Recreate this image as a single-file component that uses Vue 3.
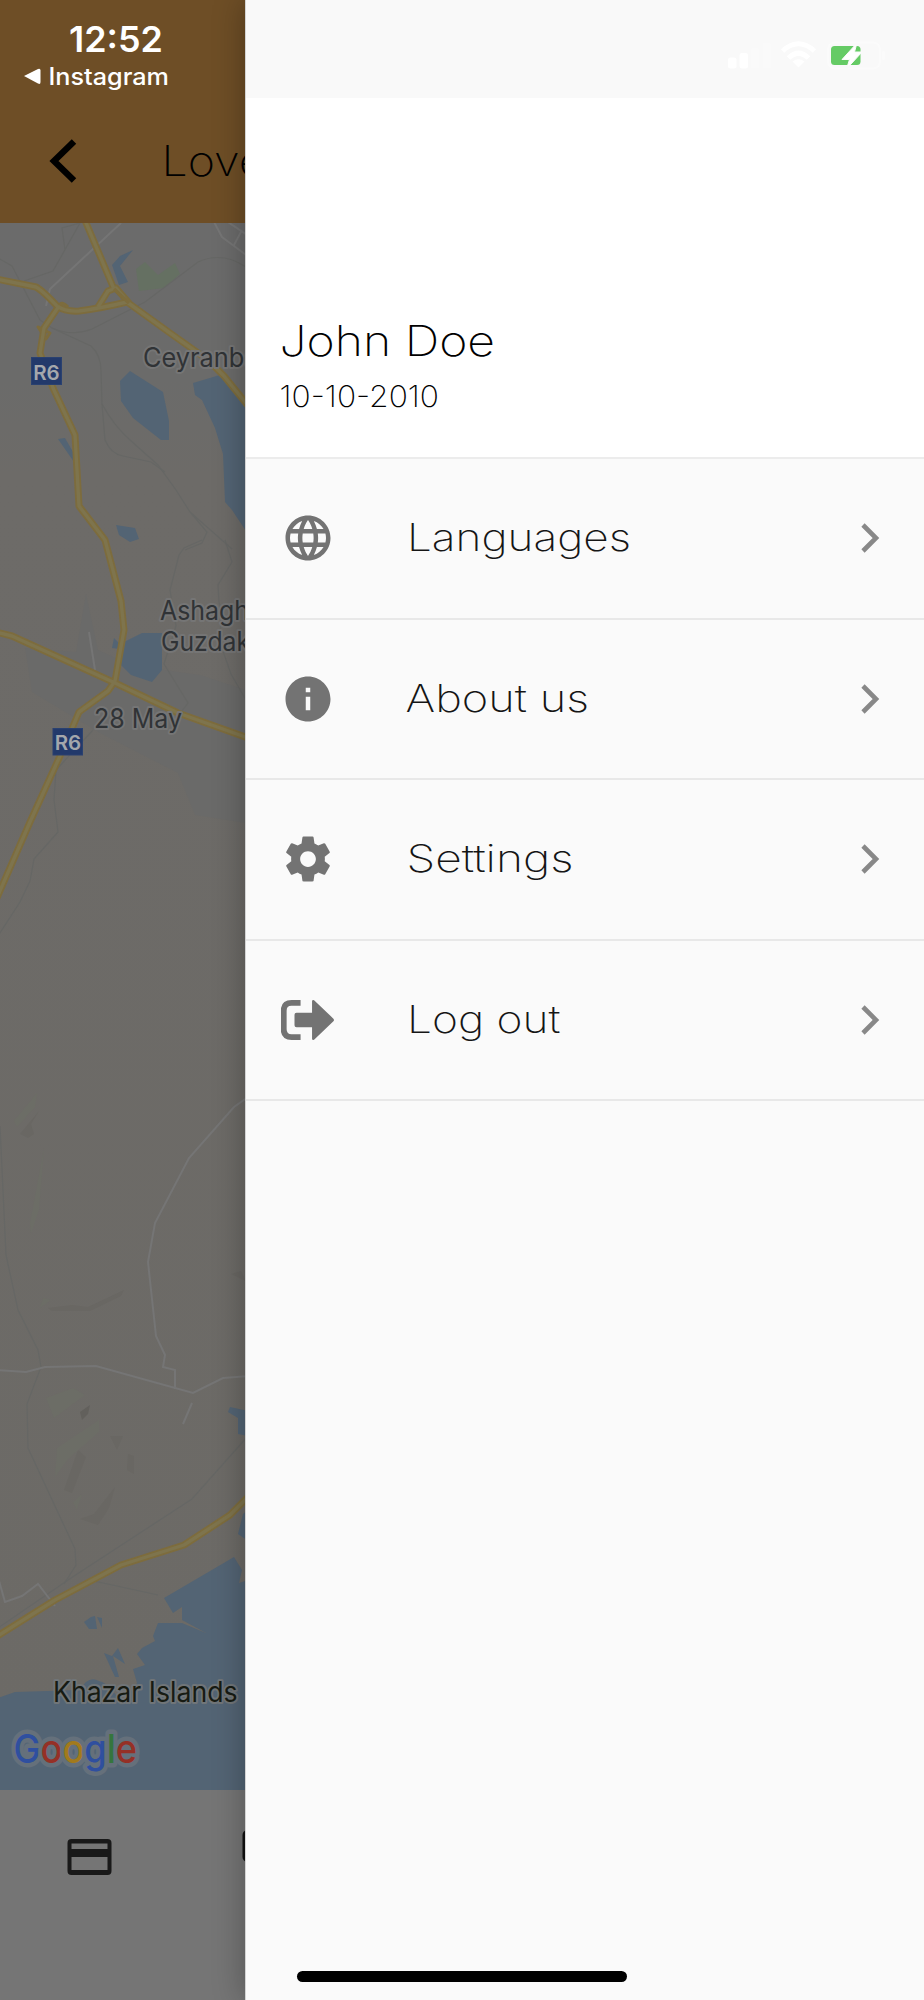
<script setup>
const rows = [
  { icon: 'globe', label: 'Languages', x: -1, width: 224 },
  { icon: 'info', label: 'About us', x: -2.5, width: 183.5 },
  { icon: 'gear', label: 'Settings', x: -1.5, width: 167 },
  { icon: 'logout', label: 'Log out', x: -1, width: 153.5 },
]

const highways = [
  'M84 218 L114 289',
  'M-4 279 L36 287 Q42 290 57 306 Q66 312 79 311 Q102 308 127 302 L170 333 L208 360 L224 376 L250 408',
  'M98 307 L108 291 L116 288 L129 303',
  'M59 306 L44 328 L40 353 L53 388 L75 435 L79 506 L105 540 L121 601 L124 630 L115 681 L108 691 L79 712 L65 745 L30 822 L-4 900',
  'M-4 632 L12 636 L113 682 L178 713 L248 738',
  'M-4 1637 L55 1600 L121 1565 L184 1545 L230 1515 L250 1495',
]
const minorRoads = [
  'M121 223 L50 289 L46 306',
  'M213 220 L222 237 L234 246 L250 258 M225 220 L250 237 M242 230 L234 245',
  'M89 632 L95 670',
  'M248 1097 L234 1107 L189 1158 L155 1223 L148 1262 L156 1336 L165 1355 L163 1367 L175 1370 L175 1389',
  'M-4 1370 L26 1372 L45 1367 L96 1366 L193 1393 L223 1378 L248 1376',
  'M192 1403 L183 1424',
  'M-4 1570 L5 1602 L22 1596 L38 1584 L55 1606',
]
const faintRoads = [
  'M80 223 L62 228 L65 250 M80 223 L53 271 L24 281',
  'M-2 258 L12 266 L40 320 L52 328 Q72 337 92 329 L145 302 L198 262 Q222 251 246 267',
  'M52 328 L91 346 Q101 355 101 371 L102 404 Q114 426 130 440 L158 465 L176 490 L190 512 L207 532 L202 543 L185 550 M190 512 L232 549',
  'M102 404 L105 440 Q111 454 123 456 L151 462 L165 472',
  'M202 540 L184 548 L179 555 L170 590 L176 626 L164 664 L188 703 L178 716',
  'M225 540 L232 562 L218 585 L219 602 L222 615 L219 640 L231 674 L246 700',
  'M93 730 L56 770 L54 800 L58 832 L34 859 L30 881 L20 902 L-2 936',
  'M0 1126 L6 1255 L18 1310 L38 1350 L41 1367 L27 1404 L28 1448 L75 1549 L76 1565 L64 1584',
  'M248 1436 L192 1499 L71 1578 L-2 1628 M94 1581 L158 1595',
]
const waters = [
  'M133 250 L120 256 L112 265 L119 285 L128 282 L120 266 Z',
  'M120 381 L130 371 L163 392 L169 421 L169 440 L161 440 L133 418 L121 401 Z',
  'M193 383 L220 375 L248 410 L248 534 L232 510 L225 502 L223 454 L215 428 L202 400 L195 395 Z',
  'M58 439 L65 438 L73 452 L74 462 Z',
  'M116 525 L135 528 L139 539 L130 542 L119 535 Z',
  'M112 648 L114 638 L120 644 L142 633 L162 633 L162 670 L152 682 L131 675 L120 664 L120 649 Z',
  'M230 1407 L248 1411 L248 1436 L238 1434 L238 1418 L228 1412 Z',
  'M248 1510 L243 1514 L238 1534 L248 1541 Z',
  'M-2 1698 L15 1692 L80 1690 Q88 1675 99 1681 Q112 1684 121 1705 L137 1683 L133 1669 L145 1665 L137 1654 L142 1648 L155 1641 L153 1636 L158 1623 L182 1623 L206 1633 L182 1620 L182 1607 L173 1613 L164 1598 L234 1557 L242 1570 L239 1583 L248 1580 L248 1794 L-2 1794 Z',
  'M84 1622 L91 1617 L95 1616 L97 1629 L89 1629 Z',
  'M97 1617 L102 1618 L102 1628 Z',
  'M104 1653 L112 1656 L118 1648 L125 1664 L113 1656 L119 1677 L115 1677 Z',
]
</script>

<template>
  <div class="screen">
    <header class="appbar">
      <svg width="246" height="223" viewBox="0 0 246 223">
        <g fill="#fff" class="inter">
          <text x="69" y="51.7" font-size="35.5" font-weight="600" textLength="94" lengthAdjust="spacingAndGlyphs">12:52</text>
          <text x="48.5" y="85" font-size="24" font-weight="500" textLength="120.5" lengthAdjust="spacingAndGlyphs">Instagram</text>
          <path d="M24 76 L38 69 Q40.500 68 40.500 70.500 V82 Q40.500 84.800 38 83.500 Z" />
        </g>
        <path d="M74 141.500 L54 161 L74 180.500" fill="none" stroke="#000" stroke-width="6.400" />
        <text class="inter" x="161.500" y="176" font-size="42.500" font-weight="250" textLength="104" lengthAdjust="spacingAndGlyphs">Love</text>
      </svg>
    </header>

    <main class="map">
      <svg width="246" height="1567" viewBox="0 223 246 1567">
        <defs>
          <linearGradient id="land" x1="0" y1="0" x2="0" y2="1">
            <stop offset="0" stop-color="#6b6b6b" />
            <stop offset=".1" stop-color="#6b6b6a" />
            <stop offset=".16" stop-color="#6d6b68" />
            <stop offset="1" stop-color="#6c6a66" />
          </linearGradient>
        </defs>
        <rect y="223" width="246" height="1567" fill="url(#land)" />
        <path d="M25 648 L76 652 L86 594 L98 650 L120 660 L165 670 L200 675 L246 690 V823 L195 815 L178 773 L100 733 L32 692 Z" fill="#6a6a69" />
        <path d="M136 269 L145 262 L158 275 L175 263 L180 274 L164 288 L139 291 Z" fill="#657062" />
        <g fill="#696763">
          <path d="M39 1111 L31 1124 L34 1134 L28 1138 L20 1134 Z" />
          <path d="M48 1308 L72 1305 L88 1307 L124 1290 L121 1296 L90 1311 L52 1311 Z" />
          <path d="M231 1274 L241 1271 L246 1281 Z" />
          <path d="M80 1412 L90 1405 L88 1414 L82 1420 Z" fill="#62605c" />
          <path d="M110 1436 L123 1436 L117 1450 Z M78 1450 L86 1457 L72 1493 L64 1490 Z M115 1487 L109 1508 L98 1525 L80 1519 L94 1514 Z M128 1454 L134 1456 L134 1474 L127 1470 Z" />
        </g>
        <g fill="#6c6d66">
          <path d="M37 1093 L35 1107 L17 1127 L14 1121 Z M44 1148 L39 1210 L31 1234 L30 1223 Z M43 1298 L51 1300 L40 1308 Z" />
          <path d="M46 1398 L73 1388 L85 1395 L54 1418 Z M99 1420 L99 1432 L68 1459 L55 1477 L57 1448 Z M82 1494 L77 1510 L73 1502 Z" />
        </g>
        <g fill="none" stroke="#666765" stroke-width="1.200">
          <path v-for="d in faintRoads" :key="d" :d="d" />
        </g>
        <path v-for="d in waters" :key="d" :d="d" fill="#536474" />
        <g fill="none" stroke="#757575" stroke-width="2">
          <path v-for="d in minorRoads" :key="d" :d="d" />
        </g>
        <g fill="none" stroke-linejoin="round">
          <path v-for="d in highways" :key="d" :d="d" stroke="#7d6c3d" stroke-width="7" />
          <path d="M38 327 L50 333 L46 339 Z" stroke="#7d6c3d" stroke-width="3" />
          <path d="M59 306 Q61 300 68 307" stroke="#7d6c3d" stroke-width="3" />
          <path v-for="d in highways" :key="'core' + d" :d="d" stroke="#7e744d" stroke-width="3.400" />
        </g>
        <path d="M114 289 L129 303" stroke="#7d6c3d" stroke-width="3.500" />
        <g class="shields inter">
          <rect x="31.500" y="357.500" width="30" height="27" />
          <text x="46.500" y="379.500">R6</text>
          <rect x="53" y="728.500" width="29.500" height="26.500" />
          <text x="68" y="750">R6</text>
        </g>
        <g class="places">
          <text x="143" y="366.500" textLength="124" lengthAdjust="spacingAndGlyphs">Ceyranbat</text>
          <text x="160" y="620" textLength="95" lengthAdjust="spacingAndGlyphs">Ashaghi</text>
          <text x="161" y="651" textLength="89" lengthAdjust="spacingAndGlyphs">Guzdak</text>
          <text x="94" y="728" textLength="88" lengthAdjust="spacingAndGlyphs">28 May</text>
          <text class="major" x="53" y="1702" textLength="184.500" lengthAdjust="spacingAndGlyphs">Khazar Islands</text>
        </g>
        <text class="google" x="13.500" y="1763.300" textLength="123.500" lengthAdjust="spacingAndGlyphs"><tspan fill="#2f4f9f">G</tspan><tspan fill="#953026">o</tspan><tspan fill="#a27a1c">o</tspan><tspan fill="#2f4f9f">g</tspan><tspan fill="#35753d">l</tspan><tspan fill="#953026">e</tspan></text>
      </svg>
    </main>

    <nav class="tabs">
      <svg width="246" height="210" viewBox="0 1790 246 210">
        <path fill="#191919" fill-rule="evenodd" d="M71.500 1839 H107.500 Q111.500 1839 111.500 1843 V1871 Q111.500 1875 107.500 1875 H71.500 Q67.500 1875 67.500 1871 V1843 Q67.500 1839 71.500 1839 Z M71.500 1843.500 V1849 H107.500 V1843.500 Z M71.500 1857 V1870 H107.500 V1857 Z" />
        <rect x="242.500" y="1830" width="40" height="32" rx="5" fill="#111" />
      </svg>
    </nav>

    <aside class="drawer">
      <div class="status">
        <svg width="162" height="40" viewBox="724 36 162 40">
          <g fill="#fff">
            <rect x="728" y="57.500" width="8.500" height="11" rx="2.500" />
            <rect x="739.500" y="53" width="8.500" height="15.500" rx="2.500" />
            <g opacity=".25">
              <rect x="751" y="48" width="8.500" height="20.500" rx="2.500" />
              <rect x="762.500" y="42.500" width="8.500" height="26" rx="2.500" />
            </g>
            <path d="M792.500 61.500 L798.500 67.500 L804.500 61.500 Q798.500 57 792.500 61.500Z" />
          </g>
          <g fill="none" stroke="#fff" stroke-width="5">
            <path d="M782.500 51 Q798.500 36.500 814.500 51" />
            <path d="M788.500 58 Q798.500 48.500 808.500 58" />
          </g>
          <rect x="828" y="42.500" width="52" height="26" rx="7" fill="none" stroke="#fff" stroke-opacity=".4" stroke-width="2" />
          <rect x="882" y="51" width="3" height="9" rx="1.500" fill="#fff" opacity=".4" />
          <rect x="831" y="46" width="29.500" height="19" rx="3.500" fill="#65cb65" />
          <path d="M857 43 L842 59.500 H849.500 L846.500 69 L862 52 H854.500 Z" fill="#fff" stroke="#fafafa" stroke-width="1" />
        </svg>
      </div>

      <section class="profile">
        <svg width="240" height="90" viewBox="0 0 240 90" class="inter">
          <text x="-1.500" y="39.700" font-size="42.500" font-weight="250" textLength="215.500" lengthAdjust="spacingAndGlyphs">John Doe</text>
          <text x="-1.500" y="91" font-size="29.500" font-weight="250" textLength="159.500" lengthAdjust="spacingAndGlyphs">10-10-2010</text>
        </svg>
      </section>

      <div v-for="row in rows" :key="row.label" class="row">
        <svg class="icon" width="54" height="54" viewBox="0 0 24 24">
          <path v-if="row.icon === 'globe'" d="M11.990 2C6.470 2 2 6.480 2 12s4.470 10 9.990 10C17.520 22 22 17.520 22 12S17.520 2 11.990 2zm6.930 6h-2.950c-.32-1.250-.78-2.450-1.380-3.560 1.840.63 3.370 1.910 4.330 3.560zM12 4.040c.83 1.200 1.480 2.530 1.910 3.960h-3.820c.43-1.430 1.080-2.760 1.910-3.960zM4.260 14C4.100 13.360 4 12.690 4 12s.1-1.360.26-2h3.380c-.08.66-.14 1.320-.14 2s.06 1.340.14 2H4.260zm.82 2h2.950c.32 1.250.78 2.450 1.380 3.560-1.840-.63-3.370-1.900-4.330-3.560zm2.950-8H5.080c.96-1.660 2.490-2.930 4.330-3.560C8.810 5.550 8.350 6.750 8.030 8zM12 19.960c-.83-1.200-1.480-2.530-1.910-3.960h3.820c-.43 1.430-1.080 2.760-1.910 3.960zM14.340 14H9.660c-.09-.66-.16-1.320-.16-2s.07-1.350.16-2h4.680c.09.65.16 1.320.16 2s-.07 1.340-.16 2zm.25 5.560c.6-1.110 1.060-2.310 1.380-3.560h2.950c-.96 1.650-2.490 2.930-4.330 3.560zM16.360 14c.08-.66.14-1.320.14-2s-.06-1.340-.14-2h3.380c.16.64.26 1.310.26 2s-.1 1.360-.26 2h-3.380z" />
          <path v-else-if="row.icon === 'info'" d="M12 2C6.480 2 2 6.480 2 12s4.480 10 10 10 10-4.480 10-10S17.520 2 12 2zm1 15h-2v-6h2v6zm0-8h-2V7h2v2z" />
          <path v-else-if="row.icon === 'gear'" d="M19.430 12.980c.04-.32.07-.64.07-.98s-.03-.66-.07-.98l2.110-1.650c.19-.15.24-.42.12-.64l-2-3.460c-.12-.22-.39-.3-.61-.22l-2.490 1c-.52-.4-1.080-.73-1.690-.98l-.38-2.650C14.460 2.180 14.250 2 14 2h-4c-.25 0-.46.18-.49.42l-.38 2.650c-.61.25-1.170.59-1.690.98l-2.490-1c-.23-.09-.49 0-.61.22l-2 3.460c-.13.22-.07.49.12.64l2.110 1.650c-.04.32-.07.65-.07.98s.03.66.07.98l-2.110 1.650c-.19.15-.24.42-.12.64l2 3.460c.12.22.39.3.61.22l2.490-1c.52.4 1.080.73 1.690.98l.38 2.650c.03.24.24.42.49.42h4c.25 0 .46-.18.49-.42l.38-2.650c.61-.25 1.170-.59 1.690-.98l2.490 1c.23.09.49 0 .61-.22l2-3.460c.12-.22.07-.49-.12-.64l-2.110-1.650zM12 15.500c-1.930 0-3.500-1.570-3.500-3.500s1.570-3.500 3.500-3.500 3.500 1.570 3.500 3.500-1.570 3.500-3.500 3.500z" />
          <template v-else>
            <path class="bracket" d="M8.700 4.400 H4.700 Q1.200 4.400 1.200 7.900 V16.100 Q1.200 19.600 4.700 19.600 H8.700" />
            <path d="M13.800 8.800 V3.700 Q13.800 3 14.700 3.200 L23.300 11.400 Q23.800 12 23.300 12.600 L14.700 20.800 Q13.800 21 13.800 20.300 V15.200 H6.900 Q6 15.200 6 14.300 V9.700 Q6 8.800 6.900 8.800 Z" />
          </template>
        </svg>
        <svg class="label inter" width="240" height="60" viewBox="0 0 240 60">
          <text :x="row.x" y="43" font-size="38" font-weight="250" :textLength="row.width" lengthAdjust="spacingAndGlyphs">{{ row.label }}</text>
        </svg>
        <svg class="chevron" width="20" height="32" viewBox="0 0 20 32">
          <path d="M3 3 L16 16 L3 29" fill="none" stroke="#888" stroke-width="4.600" />
        </svg>
      </div>

      <div class="home"></div>
    </aside>
  </div>
</template>

<style>
body { margin: 0; overflow: hidden; }
</style>

<style scoped>
.screen {
  position: relative;
  display: flex;
  flex-direction: column;
  width: 924px;
  height: 2000px;
  overflow: hidden;
  background: #757575;
}
svg { display: block; flex: none; }
.inter text, text.inter { font-family: Inter, "Open Sans", sans-serif; }
.appbar { height: 223px; background: #6e4e26; }
.map { height: 1567px; }
.tabs { height: 210px; background: #757575; }

.shields rect { fill: #22396b; stroke: #2a4170; }
.shields text { fill: #a4a7ac; font-size: 20.5px; font-weight: 600; text-anchor: middle; }
.places text {
  font-family: Inter, Roboto, sans-serif;
  font-size: 26.5px;
  fill: #303336;
  stroke: #757575;
  stroke-width: 4px;
  stroke-linejoin: round;
  paint-order: stroke;
}
.places .major { font-size: 28px; fill: #171b13; stroke: #707578; }
.google {
  font-family: Inter, sans-serif;
  font-size: 39.5px;
  font-weight: 500;
  stroke: #65707b;
  stroke-width: 9px;
  stroke-linejoin: round;
  paint-order: stroke;
}

.drawer {
  position: absolute;
  top: 0;
  right: 0;
  bottom: 0;
  display: flex;
  flex-direction: column;
  box-sizing: border-box;
  width: 679px;
  padding-bottom: 18px;
  border-left: 1px solid #d4d4d4;
  background: #fafafa;
  box-shadow: 0 0 30px rgba(0, 0, 0, .3);
  color: #111;
}
.status {
  display: flex;
  justify-content: flex-end;
  box-sizing: border-box;
  height: 98px;
  padding: 36px 38px 0 0;
  background: #f9f9f9;
}
.profile {
  box-sizing: border-box;
  height: 361px;
  padding: 218px 0 0 35px;
  background: #fff;
  border-bottom: 2px solid #ececec;
}
.profile svg, .label { overflow: visible; }
.row {
  display: flex;
  align-items: center;
  box-sizing: border-box;
  height: 160.500px;
  padding: 0 44px 0 35px;
  border-bottom: 2px solid #e8e8e8;
}
.icon { fill: #737373; }
.bracket { fill: none; stroke: #737373; stroke-width: 2.600; }
.label { margin-left: 73px; }
.label text { fill: #151515; }
.chevron { margin-left: auto; }
.home {
  width: 330px;
  height: 11px;
  margin: auto 0 0 51px;
  border-radius: 6px;
  background: #000;
}
</style>
